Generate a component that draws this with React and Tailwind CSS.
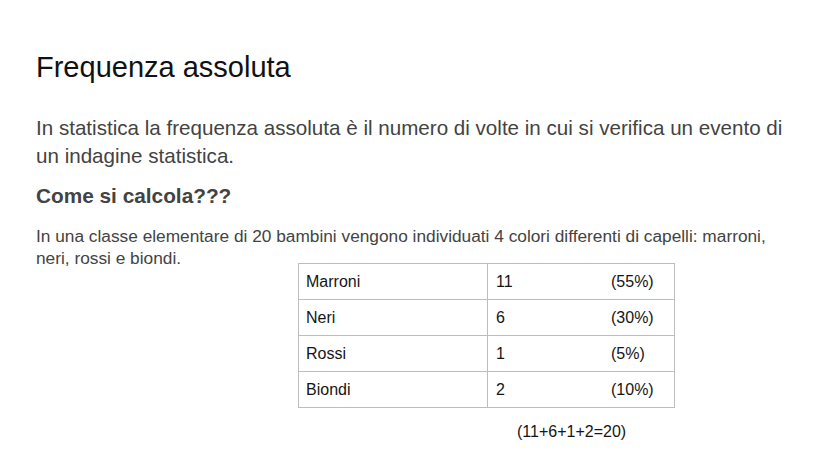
const ROWS = [
  ['Marroni', '11', '(55%)'],
  ['Neri', '6', '(30%)'],
  ['Rossi', '1', '(5%)'],
  ['Biondi', '2', '(10%)'],
]

export default function App() {
  return (
    <div className="w-[828px] h-[466px] bg-white overflow-hidden font-['Liberation_Sans',Arial,sans-serif] pl-[36px] pr-[20px]">
      <h1 className="pt-[47px] text-[29px] leading-[40px] text-[#111]">Frequenza assoluta</h1>
      <p className="mt-[27px] text-[20.6px] leading-[28px] text-[#434343]">
        In statistica la frequenza assoluta è il numero di volte in cui si verifica un evento di un indagine statistica.
      </p>
      <h2 className="mt-[12px] text-[20.8px] leading-[28px] font-bold text-[#434343]">Come si calcola???</h2>
      <p className="mt-[15px] text-[17.3px] leading-[22px] text-[#434343] w-[740px]">
        In una classe elementare di 20 bambini vengono individuati 4 colori differenti di capelli: marroni, neri, rossi e biondi.
      </p>
      <div className="ml-[262px] -mt-[6px] w-[377px]">
        <table className="w-full border-collapse text-[16px] text-[#151515]">
          <tbody>
            {ROWS.map(([name, n, pct]) => (
              <tr key={name} className="h-[36px]">
                <td className="border border-[#bdbdbd] pl-[7px] w-[189px]">{name}</td>
                <td className="border border-[#bdbdbd] pl-[8px]">
                  <div className="flex">
                    <span className="w-[115px]">{n}</span>
                    <span>{pct}</span>
                  </div>
                </td>
              </tr>
            ))}
          </tbody>
        </table>
        <div className="mt-[12px] ml-[219px] text-[16px] text-[#151515]">(11+6+1+2=20)</div>
      </div>
    </div>
  )
}
